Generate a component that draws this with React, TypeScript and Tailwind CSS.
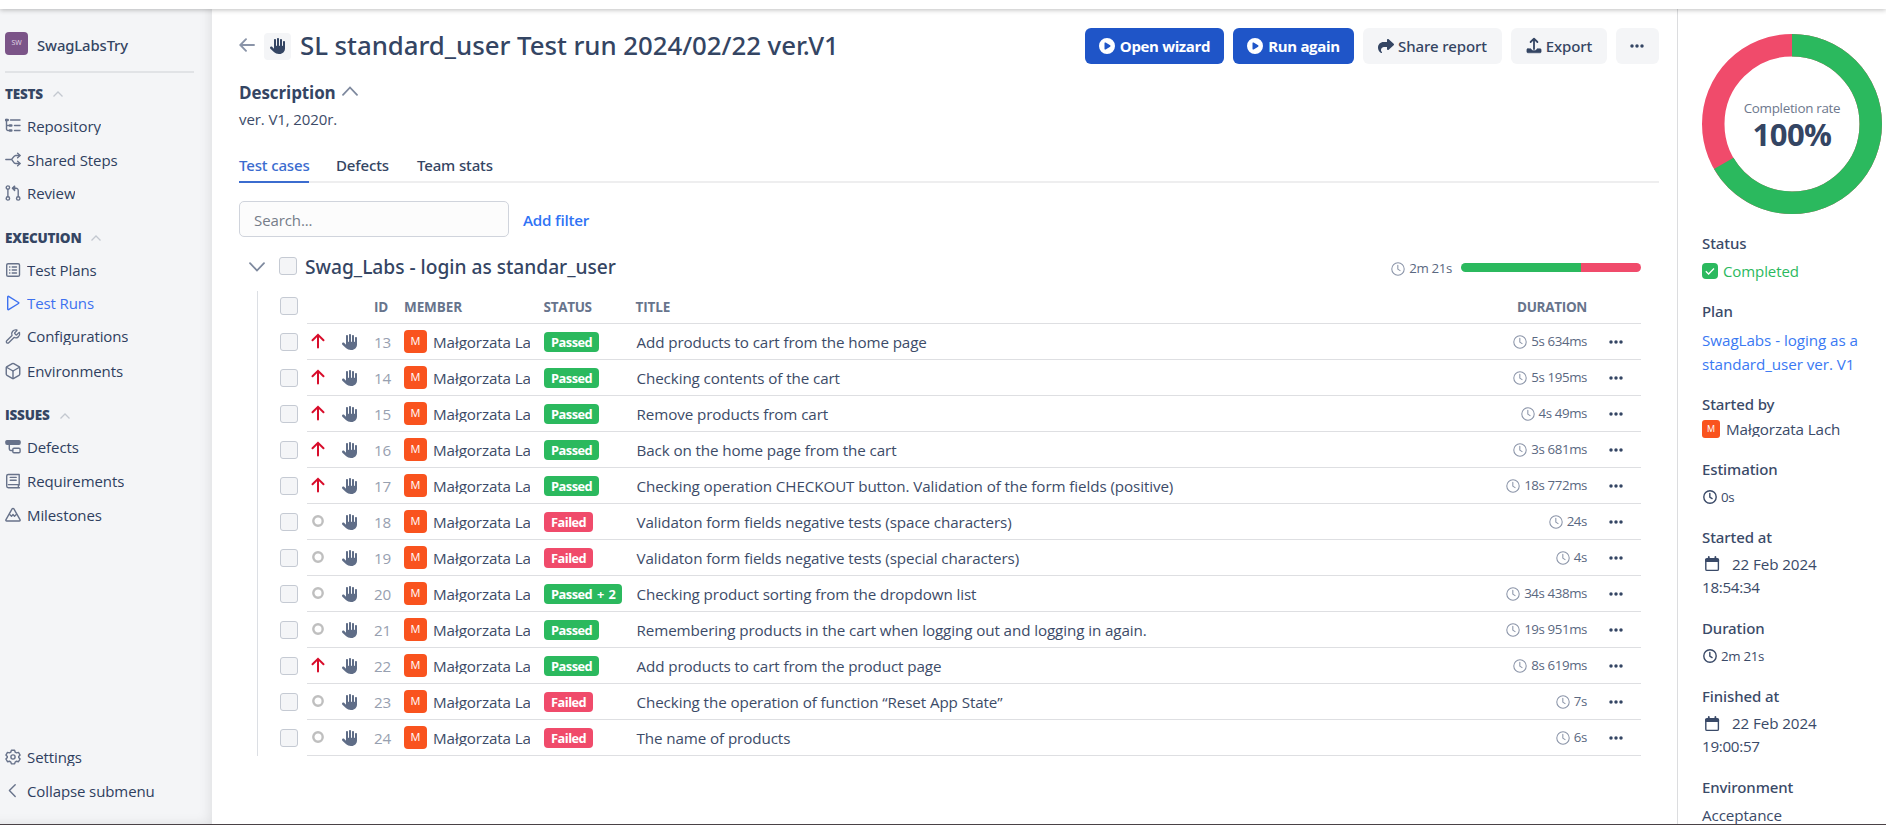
import React from "react";
import { FaHand, FaCirclePlay, FaShare } from "react-icons/fa6";
import { Box, Wrench } from "lucide-react";

type IconProps = { className?: string };

const Svg = ({ className, children, sw = 1.4 }: IconProps & { children: React.ReactNode; sw?: number }) => (
  <svg
    viewBox="0 0 16 16"
    fill="none"
    stroke="currentColor"
    strokeWidth={sw}
    strokeLinecap="round"
    strokeLinejoin="round"
    className={className ?? "size-4"}
  >
    {children}
  </svg>
);

const TreeIcon = () => (
  <Svg>
    <path d="M1.5 1.5v9.5a1.5 1.5 0 0 0 1.5 1.5h2M1.5 7.5H5" />
    <path d="M5.5 2H15M9.5 7.5H15M9.5 12.5H15" />
    <path d="M0.8 2h2M5 7.5h1.4M5 12.5h1.4" strokeWidth="2.4" />
  </Svg>
);
const SplitIcon = () => (
  <Svg>
    <path d="M.8 7.5h5.4M6.2 7.5c1.6 0 2.2-4 4.4-4H15M6.2 7.5c1.6 0 2.2 4 4.4 4H15" />
    <path d="M12.6 1.2 15 3.5l-2.4 2.3M12.6 9.2l2.4 2.3-2.4 2.3" />
  </Svg>
);
const PullIcon = () => (
  <Svg>
    <circle cx="2.9" cy="2.6" r="1.7" />
    <circle cx="2.9" cy="13.4" r="1.7" />
    <circle cx="13.2" cy="13.4" r="1.7" />
    <path d="M2.9 4.4v7.2M13.2 11.6V5.6c0-1.5-.8-2.3-2.2-2.3H8" />
    <path d="M9.6 1.1 7.4 3.3l2.2 2.2z" fill="currentColor" />
  </Svg>
);
const ListIcon = () => (
  <Svg>
    <rect x="1.7" y="1.7" width="12.8" height="12.6" rx="1.4" />
    <path d="M7.2 5h4.3M7.2 8h4.3M7.2 11h4.3M4.6 5h.3M4.6 8h.3M4.6 11h.3" />
  </Svg>
);
const PlayIcon = () => (
  <Svg>
    <path d="M2.7 1.9v12.2c0 .5.5.7.9.5l9.9-6.1c.4-.3.4-.8 0-1L3.6 1.4c-.4-.2-.9 0-.9.5z" />
  </Svg>
);
const DefectIcon = () => (
  <Svg>
    <rect x="0.9" y="1.6" width="14.2" height="3.6" rx="1.2" fill="currentColor" />
    <path d="M4.3 5.5v4.6c0 1 .5 1.4 1.4 1.4h1.9" />
    <rect x="7.8" y="9.2" width="7.3" height="4.5" rx="1.2" />
  </Svg>
);
const BookIcon = () => (
  <Svg>
    <path d="M14.2 12V1.5H3.3c-.9 0-1.6.7-1.6 1.6v10c0 1 .7 1.6 1.6 1.6h11.1M3.4 11.6h10.8M13.4 11.8v2.6M5.2 4.4h6M5.2 7.2h6" />
  </Svg>
);
const PeakIcon = () => (
  <Svg>
    <path d="M7.1 1.9 1 12.7c-.4.7 0 1.3.7 1.3h12.6c.7 0 1.1-.6.7-1.3L8.900 1.900c-.4-.7-1.400-.7-1.800 0z" />
    <path d="M4.7 7.6 6.5 9.2 8 7.6l1.5 1.6 1.8-1.6" />
  </Svg>
);
const GearIcon = () => (
  <Svg>
    <circle cx="8" cy="8" r="2.1" />
    <path d="M6.4 1.2h3.2l.6 2 1.3.7 2-.5 1.6 2.7L13.7 7.6v.9l1.4 1.5-1.6 2.7-2-.5-1.3.8-.6 1.9H6.4l-.6-1.9-1.3-.8-2 .5L.9 10l1.4-1.5v-.9L.9 6.1l1.6-2.7 2 .5 1.3-.7z" />
  </Svg>
);
const ChevronLeftIcon = () => (
  <Svg>
    <path d="M10.2 1.8 4.4 7.6l5.8 5.8" />
  </Svg>
);
const Clock = ({ className, sw = 1.2 }: IconProps & { sw?: number }) => (
  <Svg className={className} sw={sw}>
    <circle cx="8" cy="8" r="7.1" />
    <path d="M7.8 3.8v4.4l2.6 1.6" />
  </Svg>
);
const Calendar = () => (
  <Svg className="size-4">
    <rect x="1.8" y="2.8" width="12.6" height="11.6" rx="1.2" />
    <path d="M1.8 3.4h12.6v1.8H1.8z" fill="currentColor" />
    <path d="M4.8.9v2M11.4.9v2" strokeWidth="1.8" />
  </Svg>
);
const Dots = ({ className }: IconProps) => (
  <svg viewBox="0 0 14 4" fill="currentColor" className={className ?? "h-1 w-3.5"}>
    <circle cx="2" cy="2" r="1.75" />
    <circle cx="7" cy="2" r="1.75" />
    <circle cx="12" cy="2" r="1.75" />
  </svg>
);
const ExportIcon = () => (
  <Svg className="h-[18px] w-4" sw={1.8}>
    <path d="M8 11V.8M4.6 4 8 .7 11.400 4" />
    <path
      d="M1.900 10.800h3c.4 1.300 1.700 1.900 3.100 1.900s2.700-.6 3.100-1.900h3c.6 0 1 .4 1 1v2c0 .6-.4 1-1 1H1.900c-.6 0-1-.4-1-1v-2c0-.6.4-1 1-1z"
      fill="currentColor"
      strokeWidth=".6"
    />
  </Svg>
);
const Caret = () => (
  <svg viewBox="0 0 10 6" fill="none" stroke="#c3c8d0" strokeWidth="1.3" className="h-1.5 w-2.5">
    <path d="M.5 5.5 5 1l4.5 4.5" />
  </svg>
);

type Item = { label: string; icon: React.ReactNode; active?: boolean; short?: boolean };

const NavItem = ({ label, icon, active, short }: Item) => (
  <li className={`flex h-[33.7px] items-center gap-1.5 ${active ? "text-[#3d71f0]" : "text-[#67728a]"}`}>
    <span className="flex size-4 items-center justify-center">{icon}</span>
    <span
      className={`overflow-hidden text-[15px] ${short ? "h-[17px] leading-[17px]" : "h-[18px] leading-[18px]"} ${
        active ? "" : "text-[#2f3f60]"
      }`}
    >
      {label}
    </span>
  </li>
);

const NavSection = ({ title, items, className }: { title: string; items: Item[]; className: string }) => (
  <section className={className}>
    <h3 className="flex h-[30px] items-center gap-2.5 text-[13.5px] font-extrabold tracking-[-0.2px] text-[#344563]">
      {title}
      <Caret />
    </h3>
    <ul>
      {items.map((i) => (
        <NavItem key={i.label} {...i} />
      ))}
    </ul>
  </section>
);

const TESTS: Item[] = [
  { label: "Repository", icon: <TreeIcon /> },
  { label: "Shared Steps", icon: <SplitIcon /> },
  { label: "Review", icon: <PullIcon /> },
];
const EXECUTION: Item[] = [
  { label: "Test Plans", icon: <ListIcon /> },
  { label: "Test Runs", icon: <PlayIcon />, active: true },
  { label: "Configurations", icon: <Wrench className="size-[17px]" strokeWidth={2} />, short: true },
  { label: "Environments", icon: <Box className="size-[18px] shrink-0" strokeWidth={1.9} /> },
];
const ISSUES: Item[] = [
  { label: "Defects", icon: <DefectIcon /> },
  { label: "Requirements", icon: <BookIcon /> },
  { label: "Milestones", icon: <PeakIcon /> },
];

type Row = { id: number; up?: boolean; status: string; title: string; duration: string };

const ROWS: Row[] = [
  { id: 13, up: true, status: "Passed", title: "Add products to cart from the home page", duration: "5s 634ms" },
  { id: 14, up: true, status: "Passed", title: "Checking contents of the cart", duration: "5s 195ms" },
  { id: 15, up: true, status: "Passed", title: "Remove products from cart", duration: "4s 49ms" },
  { id: 16, up: true, status: "Passed", title: "Back on the home page from the cart", duration: "3s 681ms" },
  {
    id: 17,
    up: true,
    status: "Passed",
    title: "Checking operation CHECKOUT button. Validation of the form fields (positive)",
    duration: "18s 772ms",
  },
  { id: 18, status: "Failed", title: "Validaton form fields negative tests (space characters)", duration: "24s" },
  { id: 19, status: "Failed", title: "Validaton form fields negative tests (special characters)", duration: "4s" },
  { id: 20, status: "Passed + 2", title: "Checking product sorting from the dropdown list", duration: "34s 438ms" },
  {
    id: 21,
    status: "Passed",
    title: "Remembering products in the cart when logging out and logging in again.",
    duration: "19s 951ms",
  },
  { id: 22, up: true, status: "Passed", title: "Add products to cart from the product page", duration: "8s 619ms" },
  { id: 23, status: "Failed", title: "Checking the operation of function “Reset App State”", duration: "7s" },
  { id: 24, status: "Failed", title: "The name of products", duration: "6s" },
];

const Checkbox = () => <span className="block size-[18px] shrink-0 rounded-[3px] border border-[#c5cad3] bg-[#f4f5f7]" />;

const TableRow = ({ id, up, status, title, duration }: Row) => (
  <div className="flex h-9">
    <div className="flex w-[27px] items-center">
      <Checkbox />
    </div>
    <div className="flex flex-1 items-center border-b border-[#dedfe2] pl-1">
      <span className="flex w-[31px] justify-start">
        {up ? (
          <svg
            viewBox="0 0 14 16"
            fill="none"
            stroke="#d80d2b"
            strokeWidth="2"
            className="h-4 w-3.5 -translate-y-px"
            strokeLinecap="round"
          >
            <path d="M7 14.5V2M1.5 7.3 7 1.8l5.5 5.500" />
          </svg>
        ) : (
          <svg viewBox="0 0 14 14" fill="none" stroke="#bfbfbf" strokeWidth="2.4" className="size-3.5 -translate-y-px">
            <circle cx="7" cy="7" r="4.7" />
          </svg>
        )}
      </span>
      <FaHand className="size-4 text-[#5f6d87]" />
      <span className="ml-4 w-[30px] pt-px text-[#97a0b0]">{id}</span>
      <span className="flex size-[23px] items-center justify-center rounded bg-[#f9531e] text-[11px] font-medium text-white">
        M
      </span>
      <span className="ml-1.5 h-4 w-[97px] overflow-hidden leading-4 whitespace-nowrap">Małgorzata Lach</span>
      <span className="ml-3.5 flex w-[92.5px]">
        <span
          className={`h-5 rounded px-[7px] text-[12.8px] leading-5 font-bold tracking-[-0.5px] text-white [word-spacing:2px] ${
            status === "Failed" ? "bg-[#f04b6b]" : "bg-[#2bb95e]"
          }`}
        >
          {status}
        </span>
      </span>
      <span className="flex-1 pt-[1.5px]">{title}</span>
      <span className="flex items-center gap-1 pt-px text-[13.3px] tracking-[-0.4px] text-[#5a6881]">
        <Clock className="size-3.5 text-[#8a94a8]" />
        {duration}
      </span>
      <Dots className="mr-[18px] ml-[22px] h-1 w-3.5 text-[#344563]" />
    </div>
  </div>
);

const Info = ({ label, children }: { label: string; children: React.ReactNode }) => (
  <div className="mb-[16.2px]">
    <h4 className="h-6 font-['Noto_Sans',sans-serif] text-[15px] leading-6 font-medium tracking-[-0.1px]">{label}</h4>
    <div className="mt-1 leading-6">{children}</div>
  </div>
);

const TimeValue = ({ children }: { children: string }) => (
  <div className="flex h-6 items-center gap-1 pl-px text-[13.3px] tracking-[-0.3px]">
    <Clock className="size-3.5" sw={1.6} />
    {children}
  </div>
);

const DateValue = ({ date, time }: { date: string; time: string }) => (
  <div className="leading-[23.4px]">
    <div className="flex items-center gap-3 pl-0.5">
      <Calendar />
      {date}
    </div>
    <div className="tracking-[-0.3px]">{time}</div>
  </div>
);

const button = "flex h-9 items-center justify-center rounded-md";
const mediumFace = "font-['Noto_Sans',sans-serif] font-medium";

export default function App() {
  return (
    <div className="flex h-[825px] w-full flex-col overflow-hidden border-b border-[#4a4246] bg-white font-['Open_Sans',sans-serif] text-[15.2px] tracking-[-0.1px] text-[#3c4b68]">
      <div className="relative z-10 h-[9px] shrink-0 bg-white shadow-[0_1px_5px_rgba(0,0,0,0.26)]" />
      <div className="flex min-h-0 flex-1">
        <aside className="flex w-[212px] shrink-0 flex-col bg-[#f4f5f7] pl-[5px] shadow-[inset_-8px_-6px_12px_-6px_rgba(0,0,0,0.09)]">
          <div className="mr-[18px] flex h-[64px] items-start gap-[9px] border-b-2 border-[#e1e3e6] pt-[23px]">
            <span className="flex size-[23px] items-center justify-center rounded bg-[#7b5488] text-[7px] text-[#e3d8e8]">
              SW
            </span>
            <span className={`${mediumFace} mt-[1px] text-[14.8px] leading-6 text-[#344563]`}>SwagLabsTry</span>
          </div>
          <NavSection title="TESTS" items={TESTS} className="mt-[6px]" />
          <NavSection title="EXECUTION" items={EXECUTION} className="mt-[12.6px]" />
          <NavSection title="ISSUES" items={ISSUES} className="mt-[13.2px]" />
          <ul className="mt-auto mb-[16px]">
            <NavItem label="Settings" icon={<GearIcon />} short />
            <NavItem label="Collapse submenu" icon={<ChevronLeftIcon />} />
          </ul>
        </aside>

        <main className="flex min-w-0 flex-1 flex-col pt-[19px] pr-[18px] pl-[27px]">
          <header className="flex h-9 items-center">
            <svg
              viewBox="0 0 16 14"
              fill="none"
              stroke="#8a94a8"
              strokeWidth="1.9"
              strokeLinecap="round"
              className="mr-[9px] h-3.5 w-4 -translate-y-px"
            >
              <path d="M15 7H1.5M7 1.2 1.3 7 7 12.8" />
            </svg>
            <span className="flex size-[27px] items-center justify-center rounded bg-[#f4f5f7]">
              <FaHand className="size-4 text-[#344563]" />
            </span>
            <h1 className={`${mediumFace} -mt-[2px] ml-[9px] flex-1 text-[25.8px] tracking-[-0.03px] text-[#344563]`}>
              SL standard_user Test run 2024/02/22 ver.V1
            </h1>
            <div className="flex gap-[9px] text-[15px] text-[#344563]">
              <button className={`${button} w-[139px] gap-[5px] bg-[#1f55c8] font-bold tracking-[-0.35px] text-white`}>
                <FaCirclePlay className="size-4" />
                Open wizard
              </button>
              <button className={`${button} w-[121px] gap-[5px] bg-[#1f55c8] font-bold tracking-[-0.35px] text-white`}>
                <FaCirclePlay className="size-4" />
                Run again
              </button>
              <button className={`${button} ${mediumFace} w-[139px] gap-1 bg-[#f4f5f7]`}>
                <FaShare className="size-4" />
                Share report
              </button>
              <button className={`${button} ${mediumFace} w-[96px] gap-1 bg-[#f4f5f7]`}>
                <ExportIcon />
                Export
              </button>
              <button className={`${button} w-[43px] bg-[#f4f5f7]`}>
                <Dots className="h-1 w-3.5 -translate-x-px" />
              </button>
            </div>
          </header>

          <h2 className="mt-[17px] flex h-6 items-center gap-1.5 text-[17px] font-bold text-[#344563]">
            Description
            <svg
              viewBox="0 0 16 10"
              fill="none"
              stroke="#7e899e"
              strokeWidth="1.8"
              strokeLinecap="round"
              className="-mt-1 h-2.5 w-4"
            >
              <path d="M1 8.8 8 1.5l7 7.3" />
            </svg>
          </h2>
          <p className="mt-[2px] text-[15px] leading-6">ver. V1, 2020r.</p>

          <nav className={`${mediumFace} mt-[22px] flex h-[30px] border-b-2 border-[#eeeeef] text-[15px] tracking-[-0.15px] text-[#344563]`}>
            <a className="mr-[27px] h-[30px] w-[70px] border-b-2 border-[#3b6ccf] leading-6 whitespace-nowrap text-[#3b6ccf]">
              Test cases
            </a>
            <a className="mr-[27px] w-[54px] leading-6">Defects</a>
            <a className="leading-6">Team stats</a>
          </nav>

          <div className="mt-[18px] flex items-center gap-3.5">
            <div className="flex h-9 w-[270px] items-center rounded-[5px] border border-[#d0d4dc] bg-[#fcfcfc] px-3.5 pt-0.5 text-[15px] text-[#767d89]">
              Search...
            </div>
            <a className="pt-0.5 font-semibold tracking-[-0.2px] text-[#2f73f5]">Add filter</a>
          </div>

          <div className="mt-[18px] flex h-6 items-center pr-[18px] pl-2.5">
            <svg
              viewBox="0 0 16 10"
              fill="none"
              stroke="#7e899e"
              strokeWidth="1.8"
              strokeLinecap="round"
              className="mr-3.5 h-2.5 w-4"
            >
              <path d="m1 1.2 7 7.3 7-7.3" />
            </svg>
            <span className="-mt-0.5">
              <Checkbox />
            </span>
            <h2 className={`${mediumFace} ml-[8px] flex-1 text-[19.2px] leading-6 tracking-[-0.02px] text-[#344563]`}>
              Swag_Labs - login as standar_user
            </h2>
            <span className="mt-[3px] mr-[9px] flex items-center gap-1 text-[13.3px] tracking-[-0.35px] text-[#5a6881]">
              <Clock className="size-3.5 text-[#8a94a8]" />
              2m 21s
            </span>
            <span className="flex h-[9px] w-[180px] overflow-hidden rounded-full">
              <span className="w-2/3 bg-[#2bb95e]" />
              <span className="w-1/3 bg-[#f04b6b]" />
            </span>
          </div>

          <div className="mt-3 mr-[18px] ml-[18px] border-l border-[#dcdfe4] pl-[22px]">
            <div className="-mt-[3px] flex h-9">
              <div className="flex w-[27px] items-center">
                <Checkbox />
              </div>
              <div className="flex flex-1 items-center border-b border-[#dedfe2] pt-[3px] text-[13.5px] font-bold text-[#67748c]">
                <span className="ml-[67px] w-[30px]">ID</span>
                <span className="w-[139.5px]">MEMBER</span>
                <span className="w-[92px] tracking-[-0.3px]">STATUS</span>
                <span className="flex-1">TITLE</span>
                <span className="mr-[54px] tracking-[-0.3px]">DURATION</span>
              </div>
            </div>
            {ROWS.map((r) => (
              <TableRow key={r.id} {...r} />
            ))}
          </div>
        </main>

        <aside className="w-[209px] shrink-0 overflow-hidden border-l border-[#dcdddf] pt-[25px] pl-6 text-[#3a4a68]">
          <div className="grid size-[180px]">
            <svg
              viewBox="0 0 180 180"
              className="col-start-1 row-start-1 size-[180px] -rotate-90"
              fill="none"
              strokeWidth="22.5"
            >
              <circle cx="90" cy="90" r="78.75" stroke="#f04b6b" />
              <circle cx="90" cy="90" r="78.75" stroke="#2bb95e" pathLength="360" strokeDasharray="240 120" />
            </svg>
            <div className="col-start-1 row-start-1 flex flex-col items-center justify-center">
              <span className="text-[13.4px] leading-5 tracking-[-0.3px] text-[#6d788d]">Completion rate</span>
              <span className="text-[31px] leading-8 font-bold tracking-[-0.5px] text-[#344563]">100%</span>
            </div>
          </div>
          <div className="mt-[17px]">
            <Info label="Status">
              <div className="flex h-6 items-center gap-[5px] text-[15px] text-[#2bb95e]">
                <span className="flex size-4 items-center justify-center rounded bg-[#2bb95e]">
                  <svg viewBox="0 0 12 12" fill="none" stroke="white" strokeWidth="1.3" className="size-3">
                    <path d="m1.8 6.3 2.8 2.7 5.4-5.5" />
                  </svg>
                </span>
                Completed
              </div>
            </Info>
            <Info label="Plan">
              <a className="block w-[170px] pt-px text-[15.2px] tracking-[-0.05px] text-[#3a79f3]">
                SwagLabs - loging as a standard_user ver. V1
              </a>
            </Info>
            <Info label="Started by">
              <div className="-mt-[3px] -mb-px flex h-6 items-center gap-1.5">
                <span className="flex size-[18px] items-center justify-center rounded-[3px] bg-[#f9531e] text-[9px] text-white">
                  M
                </span>
                <span className="h-4 overflow-hidden leading-4">Małgorzata Lach</span>
              </div>
            </Info>
            <Info label="Estimation">
              <TimeValue>0s</TimeValue>
            </Info>
            <Info label="Started at">
              <DateValue date="22 Feb 2024" time="18:54:34" />
            </Info>
            <Info label="Duration">
              <TimeValue>2m 21s</TimeValue>
            </Info>
            <Info label="Finished at">
              <DateValue date="22 Feb 2024" time="19:00:57" />
            </Info>
            <Info label="Environment">Acceptance</Info>
          </div>
        </aside>
      </div>
    </div>
  );
}
